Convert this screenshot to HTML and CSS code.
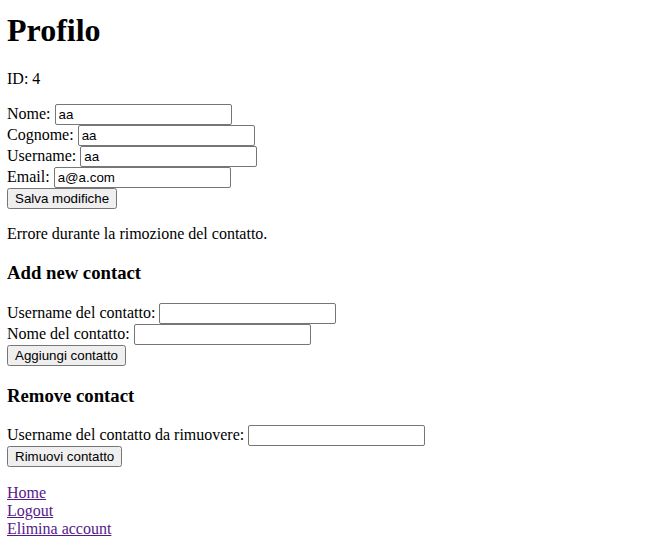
FILE: index.html
```html
<!DOCTYPE html>
<html>
<head>
<meta charset="utf-8">
<title>Profilo</title>
<link rel="stylesheet" href="styles.css">
</head>
<body>
<div class="topline"></div>
<h1>Profilo</h1>
<p>ID: 4</p>
<form>
<label>Nome: <input type="text" value="aa"></label><br>
<label>Cognome: <input type="text" value="aa"></label><br>
<label>Username: <input type="text" value="aa"></label><br>
<label>Email: <input type="email" value="a@a.com"></label><br>
<button type="button">Salva modifiche</button>
</form>
<p>Errore durante la rimozione del contatto.</p>
<h3>Add new contact</h3>
<form>
<label>Username del contatto: <input type="text"></label><br>
<label>Nome del contatto: <input type="text"></label><br>
<button type="button">Aggiungi contatto</button>
</form>
<h3>Remove contact</h3>
<form>
<label>Username del contatto da rimuovere: <input type="text"></label><br>
<button type="button">Rimuovi contatto</button>
</form>
<p class="links"><a href="#">Home</a><br><a href="#">Logout</a><br><a href="#">Elimina account</a></p>
</body>
</html>
```
FILE: styles.css
```css
html, body {
  font-family: "Liberation Serif", "Times New Roman", serif;
  font-size: 16px;
}
body {
  margin: 8px 8px 8px 7px;
}
.topline {
  margin: -8px -8px 0 -7px;
  height: 3px;
  border-bottom: 1px solid #e0e0e0;
}
h1 {
  margin-top: 8px;
}
.links {
  margin-top: 17px;
}
input {
  box-sizing: border-box;
  width: 177px;
  height: 21px;
  border: 1px solid #767676;
  border-radius: 2px;
  padding: 1px 3px;
}
input, button {
  font-family: "Liberation Sans", Arial, sans-serif;
  font-size: 13.33px;
}
a {
  color: #551a8b;
}
```
